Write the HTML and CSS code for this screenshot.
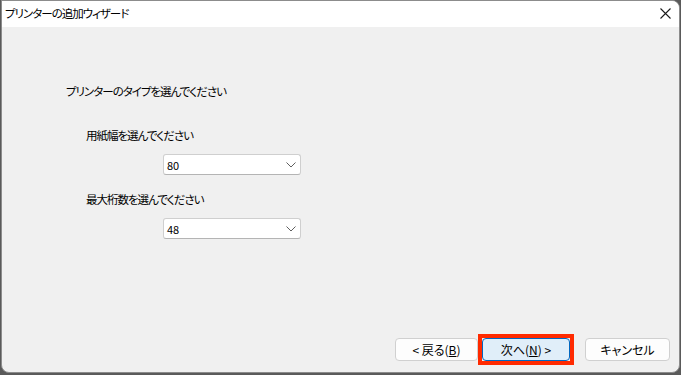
FILE: index.html
```html
<!doctype html>
<html>
	<head>
		<title>プリンターの追加ウィザード</title>
		<link rel="stylesheet" href="styles.css">
	</head>

	<body>
		<div class="window">
			<div class="titlebar">
				<span class="title">プリンターの追加ウィザード</span>
				<svg class="close-icon" width="11" height="11" viewBox="0 0 11 11">
					<path d="M0.5 0.5L10.5 10.5M10.5 0.5L0.5 10.5" stroke="#1a1a1a" stroke-width="1.1" fill="none"></path>
				</svg>
			</div>

			<div class="content">
				<div class="heading">プリンターのタイプを選んでください</div>

				<div class="field">
					<div class="field-label">用紙幅を選んでください</div>
					<div class="select">
						<span>80</span>
						<svg class="chevron" width="10" height="6" viewBox="0 0 10 6">
							<path d="M0.5 0.5L5 5L9.5 0.5" stroke="#5f5f5f" stroke-width="1" fill="none"></path>
						</svg>
					</div>
				</div>

				<div class="field">
					<div class="field-label">最大桁数を選んでください</div>
					<div class="select">
						<span>48</span>
						<svg class="chevron" width="10" height="6" viewBox="0 0 10 6">
							<path d="M0.5 0.5L5 5L9.5 0.5" stroke="#5f5f5f" stroke-width="1" fill="none"></path>
						</svg>
					</div>
				</div>
			</div>

			<div class="button-row">
				<button class="btn back-btn">&lt; 戻る(<u>B</u>)</button>
				<div class="highlight">
					<button class="btn next-btn">次へ(<u>N</u>) &gt;</button>
				</div>
				<button class="btn cancel-btn">キャンセル</button>
			</div>
		</div>
	</body>
</html>
```

FILE: styles.css
```css
body {
	margin: 0px;
	width: 681px;
	height: 375px;
	background-color: #5a5a5a;
	font-family: "Noto Sans CJK JP", "Noto Sans", sans-serif;
	font-feature-settings: "palt";
	color: #000000;
	overflow: hidden;
}

.window {
	width: 679px;
	height: 373px;
	box-sizing: border-box;
	border: 1px solid #8c8c8c;
	border-radius: 0 8px 8px 8px;
	background-color: #f0f0f0;
	display: flex;
	flex-direction: column;
	overflow: hidden;
	margin-left: 1px;
}

.titlebar {
	height: 26px;
	flex-shrink: 0;
	background-color: #ffffff;
	display: flex;
	align-items: center;
	justify-content: space-between;
	padding-left: 3px;
	padding-right: 8px;
}

.title {
	font-size: 11.5px;
	letter-spacing: -1px;
	line-height: 16px;
	margin-top: -2px;
}

.close-icon {
	margin-top: -1px;
}

.content {
	flex: 1;
	padding-top: 56px;
	padding-left: 64px;
	font-size: 11.5px;
	letter-spacing: -1px;
}

.heading {
	line-height: 16px;
	margin-bottom: 28px;
}

.field {
	display: flex;
	flex-direction: column;
	margin-bottom: 16px;
}

.field-label {
	line-height: 16px;
	padding-left: 20px;
	margin-bottom: 11px;
}

.select {
	margin-left: 97px;
	width: 138px;
	height: 21px;
	box-sizing: border-box;
	background-color: #ffffff;
	border: 1px solid #cfcfcf;
	border-bottom-color: #b4b4b4;
	border-radius: 3px;
	display: flex;
	align-items: center;
	justify-content: space-between;
	padding-left: 3px;
	padding-right: 4px;
	font-size: 11px;
	letter-spacing: 0;
}

.button-row {
	display: flex;
	justify-content: flex-end;
	align-items: center;
	padding-right: 9px;
	padding-bottom: 7px;
}

.btn {
	height: 23px;
	box-sizing: border-box;
	background-color: #fdfdfd;
	border: 1px solid #d0d0d0;
	border-radius: 4px;
	font-family: "Noto Sans CJK JP", "Noto Sans", sans-serif;
	font-feature-settings: "palt";
	font-size: 12px;
	color: #000000;
	padding: 0;
	line-height: 20px;
}

.back-btn {
	width: 83px;
}

.highlight {
	border: 4px solid #ff2a00;
	display: flex;
	margin-left: 0px;
	margin-right: 11px;
}

.next-btn {
	width: 88px;
	background-color: #e0eef9;
	border-color: #0067c0;
}

.cancel-btn {
	width: 85px;
}
```
